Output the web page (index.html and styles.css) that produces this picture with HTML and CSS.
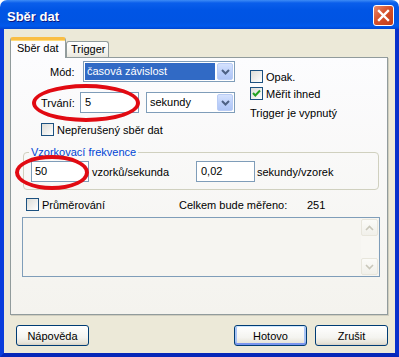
FILE: index.html
```html
<!DOCTYPE html>
<html lang="cs">
<head>
<meta charset="utf-8">
<title>Sběr dat</title>
<link rel="stylesheet" href="styles.css">
</head>
<body>
<div class="window">
  <div class="titlebar">
    <span class="title">Sběr dat</span>
    <span class="close"><svg width="13" height="13" viewBox="0 0 13 13"><path d="M2 2 L11 11 M11 2 L2 11" stroke="#fff" stroke-width="2.4" stroke-linecap="square"/></svg></span>
  </div>
  <div class="client">
    <div class="tabs">
      <div class="tab active">Sběr dat</div>
      <div class="tab">Trigger</div>
    </div>
    <div class="panel">
      <div class="top">
        <div class="left">
          <div class="row row-mode">
            <span class="lbl lbl-mode">Mód:</span>
            <div class="select sel-mode">
              <span class="selval hl">časová závislost</span>
              <span class="ddbtn"><svg width="9" height="6" viewBox="0 0 9 6"><path d="M1 1 L4.5 4.5 L8 1" fill="none" stroke="#4D6185" stroke-width="2"/></svg></span>
            </div>
          </div>
          <div class="row row-dur">
            <span class="lbl lbl-dur">Trvání:</span>
            <div class="input in-dur">5</div>
            <div class="select sel-unit">
              <span class="selval">sekundy</span>
              <span class="ddbtn"><svg width="9" height="6" viewBox="0 0 9 6"><path d="M1 1 L4.5 4.5 L8 1" fill="none" stroke="#4D6185" stroke-width="2"/></svg></span>
            </div>
          </div>
          <div class="check-row cont">
            <span class="cb"></span><span>Nepřerušený sběr dat</span>
          </div>
        </div>
        <div class="right">
          <div class="check-row">
            <span class="cb"></span><span>Opak.</span>
          </div>
          <div class="check-row gap">
            <span class="cb"><svg width="11" height="11" viewBox="0 0 11 11"><path d="M2 5 L4.3 7.5 L9 2.5" fill="none" stroke="#21A121" stroke-width="2"/></svg></span><span>Měřit ihned</span>
          </div>
          <div class="note">Trigger je vypnutý</div>
        </div>
      </div>
      <fieldset class="group">
        <legend>Vzorkovací frekvence</legend>
        <div class="freq-row">
          <div class="input in-rate">50</div>
          <span class="unit unit-rate">vzorků/sekunda</span>
          <div class="input in-period">0,02</div>
          <span class="unit">sekundy/vzorek</span>
        </div>
      </fieldset>
      <div class="avg-row">
        <span class="cb"></span>
        <span class="avg-lbl">Průměrování</span>
        <span class="total-lbl">Celkem bude měřeno:</span>
        <span>251</span>
      </div>
      <div class="log">
        <div class="scrollbar">
          <span class="sbtn"><svg width="9" height="6" viewBox="0 0 9 6"><path d="M1 5 L4.5 1.5 L8 5" fill="none" stroke="#C9C7BA" stroke-width="1.6"/></svg></span>
          <span class="sbtn"><svg width="9" height="6" viewBox="0 0 9 6"><path d="M1 1 L4.5 4.5 L8 1" fill="none" stroke="#C9C7BA" stroke-width="1.6"/></svg></span>
        </div>
      </div>
    </div>
    <div class="buttons">
      <button class="btn btn-help">Nápověda</button>
      <span class="spacer"></span>
      <button class="btn btn-default">Hotovo</button>
      <button class="btn">Zrušit</button>
    </div>
  </div>
  <div class="ellipse e1"></div>
  <div class="ellipse e2"></div>
</div>
</body>
</html>
```
FILE: styles.css
```css
* { box-sizing: border-box; }
html, body { margin: 0; padding: 0; background: #fff; }
body {
  font-family: "Liberation Sans", Arial, sans-serif;
  font-size: 11px;
  color: #000;
}
.window {
  position: relative;
  width: 399px;
  height: 357px;
  display: flex;
  flex-direction: column;
}
.titlebar {
  height: 29px;
  flex: none;
  display: flex;
  align-items: center;
  justify-content: space-between;
  padding: 3px 5px 0 7px;
  border-radius: 7px 7px 0 0;
  background: linear-gradient(to bottom, #3D8BF5 0px, #0A5EEB 3px, #0055E5 10px, #0054E3 22px, #0159EC 26px, #0046D2 29px);
}
.title {
  color: #fff;
  font-weight: bold;
  font-size: 13px;
  text-shadow: 1px 1px 0 #0A1883;
}
.close {
  width: 21px;
  height: 21px;
  display: flex;
  align-items: center;
  justify-content: center;
  border: 1px solid #fff;
  border-radius: 3px;
  background: linear-gradient(135deg, #E98B6E 0%, #D6512B 45%, #C23C18 100%);
  margin-top: -2px;
}
.client {
  flex: 1;
  background: #ECE9D8;
  border: 4px solid #0831D9;
  border-top: 0;
  border-left-color: #0A3DDC;
  border-right-color: #0730CB;
  border-bottom-color: #0627B8;
  padding: 8px 0 0 6px;
  display: flex;
  flex-direction: column;
}
.tabs {
  display: flex;
  align-items: flex-end;
  height: 21px;
  margin-bottom: -1px;
  position: relative;
  z-index: 1;
}
.tab {
  height: 16px;
  margin-bottom: 1px;
  width: 43px;
  padding-left: 4px;
  line-height: 15px;
  border: 1px solid #919B9C;
  border-bottom: 0;
  border-radius: 3px 3px 0 0;
  background: linear-gradient(to bottom, #FFFFFF, #F3F2EC 70%, #E8E6DD);
}
.tab.active {
  height: 21px;
  margin-bottom: 0;
  width: 56px;
  padding-left: 6px;
  line-height: 17px;
  background: #FCFCFE;
  border-top: 3px solid #F9BE44;
  box-shadow: inset 0 1px 0 #FFD978;
}
.panel {
  width: 378px;
  height: 258px;
  border: 1px solid #919B9C;
  box-shadow: 1px 1px 0 #D0CEBF;
  background: linear-gradient(to bottom, #FCFCFE, #F4F3EE);
}
.top { display: flex; }
.left { width: 239px; }
.row {
  display: flex;
  align-items: center;
  height: 21px;
}
.row-mode { margin-top: 3px; }
.row-dur { margin-top: 10px; }
.lbl-mode { margin-left: 39px; width: 33px; }
.lbl-dur { margin-left: 30px; width: 39px; }
.select {
  height: 21px;
  display: flex;
  border: 1px solid #7F9DB9;
  background: #fff;
  padding: 1px;
}
.sel-mode { width: 152px; }
.sel-unit { width: 89px; margin-left: 7px; }
.selval {
  flex: 1;
  line-height: 17px;
  padding-left: 2px;
  white-space: nowrap;
}
.selval.hl {
  background: #316AC5;
  color: #fff;
  margin-right: 2px;
}
.ddbtn {
  width: 16px;
  display: flex;
  align-items: center;
  justify-content: center;
  border: 1px solid #B9CCF5;
  border-radius: 2px;
  background: linear-gradient(to bottom, #D5E2FD, #BACEFA 60%, #AFC5F6);
}
.input {
  height: 21px;
  border: 1px solid #7F9DB9;
  background: #fff;
  line-height: 19px;
  padding-left: 4px;
}
.in-dur { width: 59px; }
.check-row {
  display: flex;
  align-items: center;
  height: 13px;
  gap: 3px;
}
.check-row.cont { margin: 10px 0 0 30px; }
.cb {
  width: 13px;
  height: 13px;
  flex: none;
  border: 1px solid #1C5180;
  background: linear-gradient(135deg, #DCDCD7, #FFFFFF);
  display: flex;
  align-items: center;
  justify-content: center;
}
.right { padding-top: 12px; }
.check-row.gap { margin-top: 4px; }
.note { margin-top: 7px; line-height: 13px; }
.group {
  margin: 10px 0 0 12px;
  width: 356px;
  border: 1px solid #D0D0BF;
  border-radius: 4px;
  padding: 2px 6px 7px 5px;
  min-width: 0;
}
.group legend {
  color: #0046D5;
  padding: 0 2px;
  line-height: 13px;
}
.freq-row {
  display: flex;
  align-items: center;
}
.in-rate { width: 58px; margin-left: 2px; padding-left: 3px; }
.in-period { width: 59px; padding-left: 4px; }
.unit-rate { width: 104px; margin-left: 3px; }
.unit-rate + .input + .unit { margin-left: 2px; }
.avg-row {
  display: flex;
  align-items: center;
  height: 13px;
  margin: 8px 0 0 15px;
}
.avg-lbl { margin-left: 3px; width: 137px; }
.total-lbl { width: 128px; }
.log {
  margin: 6px 0 0 11px;
  width: 358px;
  height: 60px;
  border: 1px solid #7F9DB9;
  background: #F6F5F1;
  display: flex;
  justify-content: flex-end;
  padding: 1px;
}
.scrollbar {
  width: 17px;
  display: flex;
  flex-direction: column;
  justify-content: space-between;
  background: #F8F7F3;
}
.sbtn {
  width: 17px;
  height: 17px;
  display: flex;
  align-items: center;
  justify-content: center;
  border: 1px solid #E8E6DC;
  border-radius: 2px;
  background: linear-gradient(to bottom, #FBFBF8, #F1F0EA);
}
.buttons {
  display: flex;
  width: 378px;
  margin-top: 10px;
}
.spacer { flex: 1; }
.btn {
  width: 73px;
  height: 21px;
  padding: 0;
  font-family: "Liberation Sans", Arial, sans-serif;
  font-size: 11px;
  color: #000;
  border: 1px solid #003C74;
  border-radius: 3px;
  background: linear-gradient(to bottom, #FFFFFF, #F4F4F0 60%, #E6E3D8 90%, #D6D0C5);
}
.btn-help { margin-left: 6px; }
.btn-default {
  margin-right: 8px;
  box-shadow: inset 0 1px 0 #CEE7FF, inset 0 -2px 0 #7A95EE, inset 2px 0 0 #A8C4F5, inset -2px 0 0 #A8C4F5;
}
.ellipse {
  position: absolute;
  border: 4px solid #E10A12;
  border-radius: 50%;
}
.e1 { left: 32px; top: 84px; width: 108px; height: 38px; }
.e2 { left: 15px; top: 155px; width: 74px; height: 35px; }
```
